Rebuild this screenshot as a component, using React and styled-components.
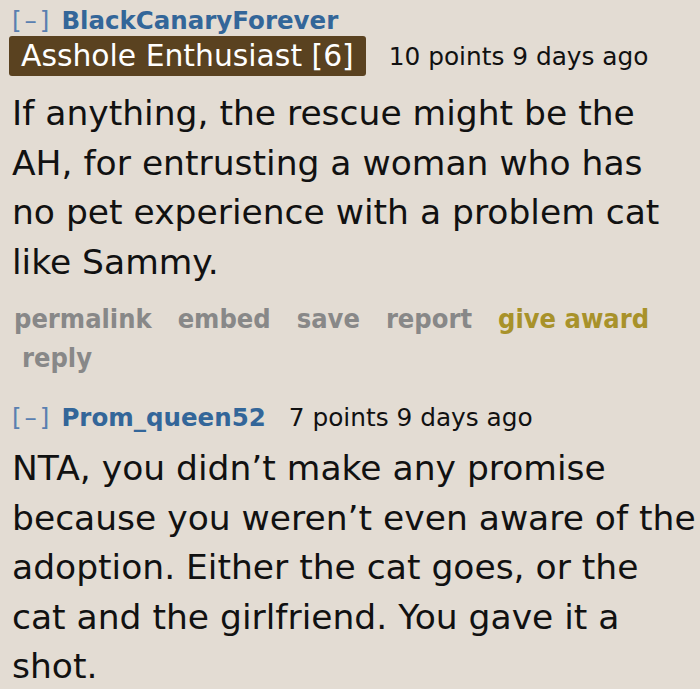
import React from "react";
import styled, { createGlobalStyle } from "styled-components";

const GlobalStyle = createGlobalStyle`
  html, body {
    margin: 0;
    padding: 0;
    background: #e3dcd3;
  }
  body {
    font-family: "DejaVu Sans", Verdana, sans-serif;
    color: #111;
  }
`;

const comments = [
  {
    author: "BlackCanaryForever",
    flair: "Asshole Enthusiast [6]",
    points: "10 points",
    age: "9 days ago",
    lines: [
      "If anything, the rescue might be the",
      "AH, for entrusting a woman who has",
      "no pet experience with a problem cat",
      "like Sammy.",
    ],
    actions: true,
  },
  {
    author: "Prom_queen52",
    points: "7 points",
    age: "9 days ago",
    lines: [
      "NTA, you didn\u2019t make any promise",
      "because you weren\u2019t even aware of the",
      "adoption. Either the cat goes, or the",
      "cat and the girlfriend. You gave it a",
      "shot.",
    ],
  },
];

const App = () => (
  <>
    <GlobalStyle />
    <StPage>
      {comments.map(c => (
        <StComment key={c.author}>
          <StHeader>
            <StToggle>[–]</StToggle>
            <StAuthor>{c.author}</StAuthor>
            {!c.flair && (
              <StMeta>
                {c.points} {c.age}
              </StMeta>
            )}
          </StHeader>
          {c.flair && (
            <StFlairRow>
              <StFlair>{c.flair}</StFlair>
              <StMeta>
                {c.points} {c.age}
              </StMeta>
            </StFlairRow>
          )}
          <StBody $afterFlair={!!c.flair}>
            {c.lines.map(line => (
              <StLine key={line}>{line}</StLine>
            ))}
          </StBody>
          {c.actions && (
            <StActions>
              <StAction>permalink</StAction>
              <StAction>embed</StAction>
              <StAction>save</StAction>
              <StAction>report</StAction>
              <StAction $gold>give award</StAction>
              <StAction>reply</StAction>
            </StActions>
          )}
        </StComment>
      ))}
    </StPage>
  </>
);

export default App;

const StPage = styled.div`
  padding: 6px 0 0 12px;
  display: flex;
  flex-direction: column;
  gap: 26px;
`;

const StComment = styled.div`
  display: flex;
  flex-direction: column;
`;

const StHeader = styled.div`
  display: flex;
  align-items: baseline;
  font-size: 24.5px;
  line-height: 30px;
`;

const StToggle = styled.span`
  color: #5a7fb0;
  font-weight: 400;
  letter-spacing: 3px;
  margin-right: 9px;
`;

const StAuthor = styled.span`
  color: #336699;
  font-weight: 700;
  margin-right: 23px;
`;

const StMeta = styled.span`
  font-size: 24.8px;
  color: #111;
`;

const StFlairRow = styled.div`
  display: flex;
  align-items: center;
  gap: 23px;
  margin-left: -3px;
`;

const StFlair = styled.span`
  background: #5a4220;
  color: #fff;
  font-size: 29.8px;
  line-height: 40px;
  padding: 0 12px;
  border-radius: 3px;
`;

const StBody = styled.p`
  margin: ${p => (p.$afterFlair ? "13px" : "11px")} 0 0;
  font-size: 34.5px;
  line-height: 49.5px;
  white-space: nowrap;
`;

const StLine = styled.span`
  display: block;
`;

const StActions = styled.div`
  display: flex;
  flex-wrap: wrap;
  column-gap: 26px;
  margin-top: 12px;
  padding-left: 2px;
  font-family: "Liberation Sans Narrow", "DejaVu Sans Condensed", sans-serif;
  font-weight: 700;
  font-size: 27px;
  line-height: 39px;
  & > :last-child {
    margin-left: 8px;
  }
`;

const StAction = styled.a`
  color: ${p => (p.$gold ? "#a8922a" : "#888")};
  cursor: pointer;
`;
